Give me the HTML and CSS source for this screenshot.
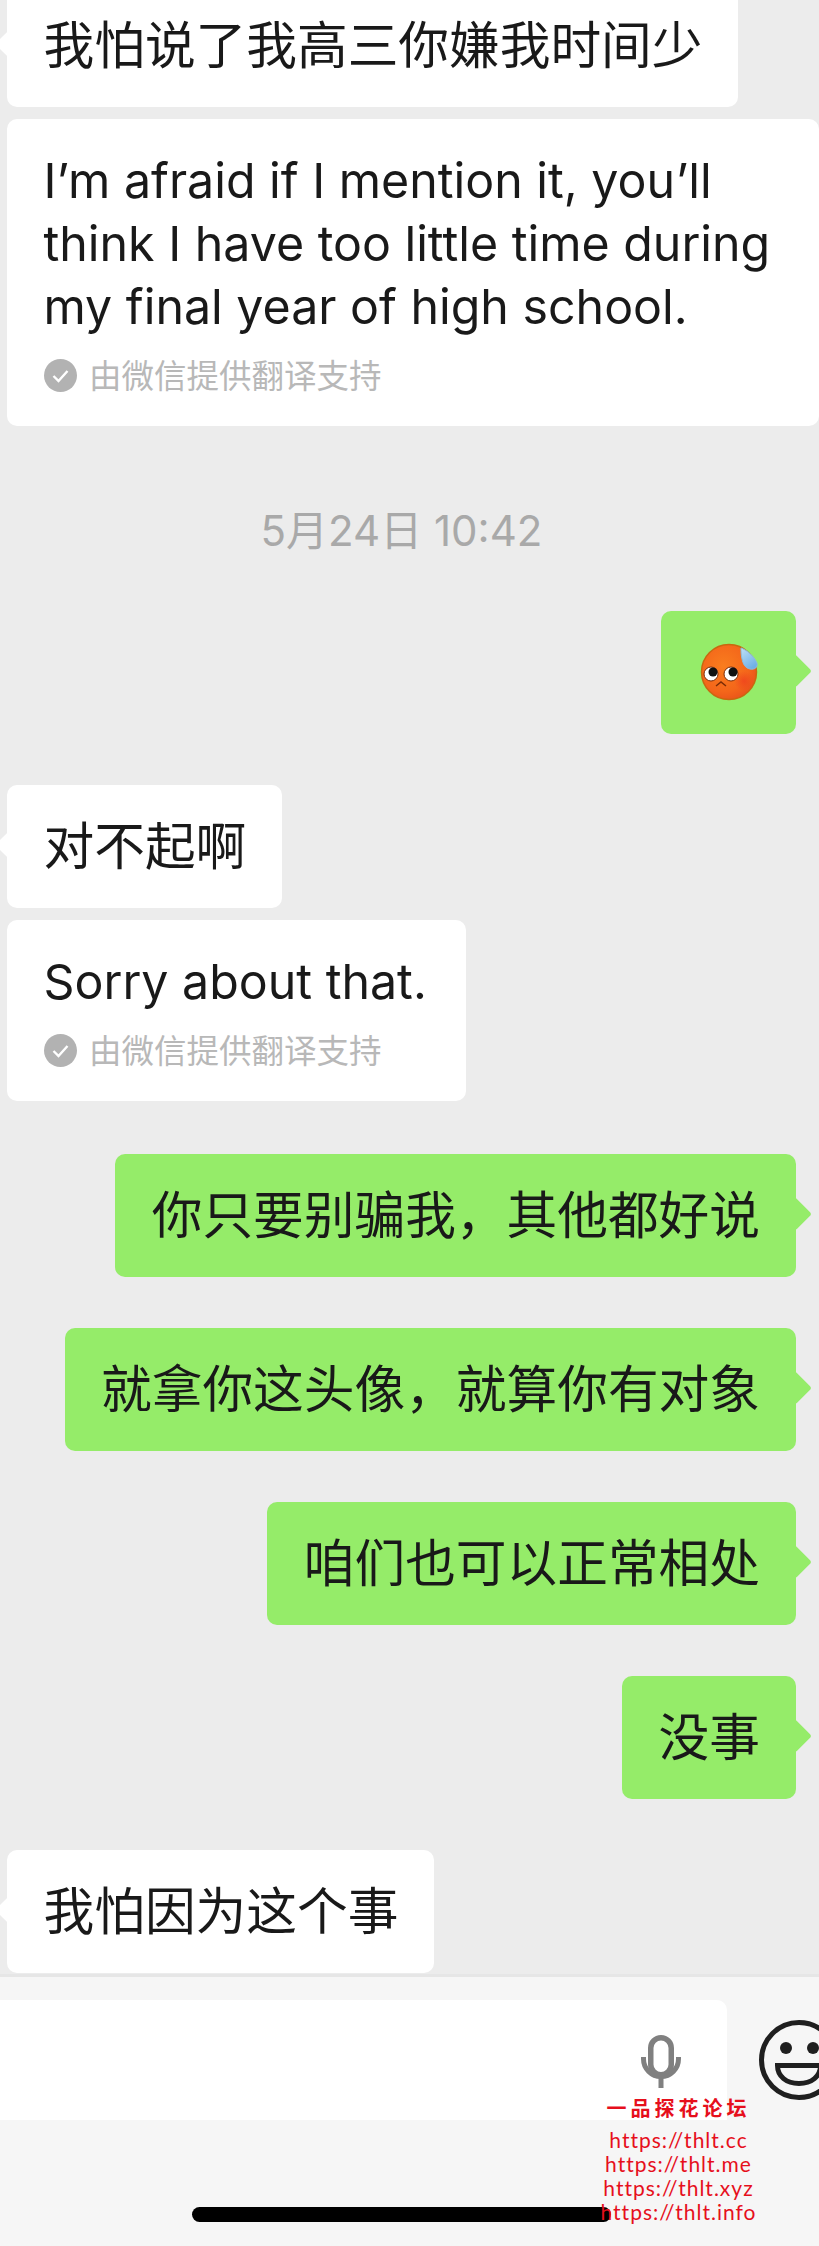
FILE: index.html
```html
<!DOCTYPE html>
<html lang="zh-CN">
<head>
<meta charset="utf-8">
<title>Chat</title>
<link rel="stylesheet" href="styles.css">
</head>
<body>
<div class="screen">
  <main class="chat">
    <div class="msg in first"><p class="text">我怕说了我高三你嫌我时间少</p></div>
    <div class="msg in plain translated wide">
      <p class="text en">I’m afraid if I mention it, you’ll think I have too little time during my final year of high school.</p>
      <div class="credit">
        <svg class="check" viewBox="0 0 33 33"><circle cx="16.5" cy="16.5" r="16.5" fill="#b2b2b2"/><path d="M9.5 17l5 5 9-10" fill="none" stroke="#fff" stroke-width="2.4"/></svg>
        <span class="credit-text">由微信提供翻译支持</span>
      </div>
    </div>
    <div class="time">5月24日 10:42</div>
    <div class="msg out emoji-msg">
      <svg class="emoji" viewBox="0 0 58 58">
        <defs>
          <radialGradient id="face" cx="40%" cy="40%" r="65%">
            <stop offset="0" stop-color="#f97d1e"/>
            <stop offset="0.7" stop-color="#f4661a"/>
            <stop offset="1" stop-color="#e9531a"/>
          </radialGradient>
          <radialGradient id="cheek" cx="50%" cy="50%" r="50%">
            <stop offset="0" stop-color="#ee3d1e" stop-opacity="0.7"/>
            <stop offset="1" stop-color="#ee3d1e" stop-opacity="0"/>
          </radialGradient>
          <linearGradient id="drop" x1="0" y1="0" x2="0.6" y2="1">
            <stop offset="0" stop-color="#bfe0f6"/>
            <stop offset="1" stop-color="#6fb0e6"/>
          </linearGradient>
        </defs>
        <circle cx="29" cy="29" r="27.500" fill="url(#face)" stroke="#c8680f" stroke-width="1.500"/>
        <circle cx="44" cy="38" r="10" fill="url(#cheek)"/>
        <circle cx="11" cy="31" r="7" fill="#fff" stroke="#7a2b06" stroke-width="1"/>
        <circle cx="13" cy="29" r="4.500" fill="#111"/>
        <circle cx="31" cy="31" r="7" fill="#fff" stroke="#7a2b06" stroke-width="1"/>
        <circle cx="33" cy="29" r="4.500" fill="#111"/>
        <path d="M16 43l5-4 5 4" fill="none" stroke="#7a2b06" stroke-width="1.500"/>
        <path d="M41 5c6 2 13 8 16 15 1 4-2 7-7 6-5-1-7-5-8-10-1-4-1-8-1-11z" fill="url(#drop)" stroke="#8dbbdc"/>
      </svg>
    </div>
    <div class="msg in"><p class="text">对不起啊</p></div>
    <div class="msg in plain translated">
      <p class="text en">Sorry about that.</p>
      <div class="credit">
        <svg class="check" viewBox="0 0 33 33"><circle cx="16.5" cy="16.5" r="16.5" fill="#b2b2b2"/><path d="M9.5 17l5 5 9-10" fill="none" stroke="#fff" stroke-width="2.4"/></svg>
        <span class="credit-text">由微信提供翻译支持</span>
      </div>
    </div>
    <div class="msg out"><p class="text">你只要别骗我，其他都好说</p></div>
    <div class="msg out"><p class="text">就拿你这头像，就算你有对象</p></div>
    <div class="msg out"><p class="text">咱们也可以正常相处</p></div>
    <div class="msg out"><p class="text">没事</p></div>
    <div class="msg in"><p class="text">我怕因为这个事</p></div>
  </main>
  <footer class="bar">
    <div class="composer">
      <div class="field">
        <svg class="mic" viewBox="0 0 40 53">
          <rect x="9.750" y="2.750" width="20.500" height="37" rx="10.250" fill="none" stroke="#808080" stroke-width="5.500"/>
          <path d="M2.500 22v2a17.500 17.500 0 0 0 35 0v-2" fill="none" stroke="#808080" stroke-width="5"/>
          <rect x="17.500" y="43" width="5" height="10" fill="#808080"/>
        </svg>
      </div>
      <svg class="smile" viewBox="0 0 80 80">
        <circle cx="40" cy="40" r="37.500" fill="none" stroke="#1f1f1f" stroke-width="5"/>
        <circle cx="27" cy="28" r="6" fill="#1f1f1f"/>
        <circle cx="54" cy="28" r="6" fill="#1f1f1f"/>
        <path d="M18.500 45.500h43c0 11-9 18-21.500 18s-21.500-7-21.500-18z" fill="none" stroke="#1f1f1f" stroke-width="5"/>
      </svg>
    </div>
    <div class="home"></div>
  </footer>
  <aside class="watermark">
    <div class="wm-title">一品探花论坛</div>
    <div class="wm-url">https://thlt.cc</div>
    <div class="wm-url">https://thlt.me</div>
    <div class="wm-url">https://thlt.xyz</div>
    <div class="wm-url">https://thlt.info</div>
  </aside>
</div>
</body>
</html>
```

FILE: styles.css
```css
* { box-sizing: border-box; }
html, body { margin: 0; padding: 0; }
body { background: #ececec; }
.screen {
  position: relative;
  width: 819px;
  height: 2246px;
  overflow: hidden;
  display: flex;
  flex-direction: column;
  background: #ececec;
  font-family: Inter, "Noto Sans CJK SC", sans-serif;
  color: #191919;
}
.chat {
  flex: 1;
  display: flex;
  flex-direction: column;
  align-items: flex-start;
  gap: 51px;
  margin-top: -16px;
  padding: 0 23px 0 7px;
}
.msg {
  position: relative;
  padding: 30px 36px 30px 36.500px;
  border-radius: 10px;
  background: #fff;
}
.msg::before {
  content: "";
  position: absolute;
  top: 60px;
  width: 24px;
  height: 24px;
  border-radius: 3px;
  background: inherit;
  transform: translateY(-50%) rotate(45deg);
}
.in::before { left: -7px; }
.out { align-self: flex-end; background: #95ec69; }
.out::before { right: -11px; }
.plain::before { display: none; }
.text {
  margin: 0;
  font-size: 50.700px;
  line-height: 63px;
  white-space: nowrap;
}
.en {
  font-size: 48.300px;
  white-space: normal;
}
.translated {
  margin-top: -39px;
  margin-bottom: 2px;
  padding: 30px 39px 34px 36.500px;
}
.wide { width: 812px; }
.first { border-radius: 0 0 10px 10px; }
.credit {
  display: flex;
  align-items: center;
  gap: 12.500px;
  margin-top: 21px;
  height: 33px;
  color: #b8b8b8;
  font-size: 32.500px;
  white-space: nowrap;
}
.credit-text { margin-bottom: 4px; }
.check { width: 33px; height: 33px; }
.time {
  width: 100%;
  margin: 27px 0 4px;
  text-align: center;
  color: #a9a9a9;
  font-size: 42px;
  line-height: 50px;
}
.emoji-msg {
  width: 135px;
  height: 123px;
  padding: 32px 39px;
}
.emoji { display: block; width: 58px; height: 58px; }
.bar {
  height: 272px;
  background: #f6f6f6;
  border-top: 3px solid #e6e6e6;
  display: flex;
  flex-direction: column;
}
.composer {
  display: flex;
  align-items: center;
  gap: 32px;
  padding-top: 23px;
}
.field {
  flex: none;
  width: 727px;
  height: 120px;
  display: flex;
  justify-content: flex-end;
  padding: 35px 46px 0 0;
  background: #fff;
  border-radius: 0 10px 0 0;
}
.mic { width: 40px; height: 53px; }
.smile { flex: none; width: 80px; height: 80px; }
.home {
  width: 419px;
  height: 15px;
  margin: 87px 0 0 192px;
  border-radius: 8px;
  background: #000;
}
.watermark {
  position: absolute;
  left: 591px;
  top: 2098px;
  width: 175px;
  text-align: center;
  color: #e60f1c;
}
.wm-title {
  font-family: "Noto Sans CJK SC", sans-serif;
  font-weight: 700;
  font-size: 20px;
  letter-spacing: 4px;
  line-height: 20px;
  margin-bottom: 10px;
}
.wm-url {
  font-family: "Lato", sans-serif;
  font-size: 21px;
  letter-spacing: 1px;
  line-height: 24px;
}
```
